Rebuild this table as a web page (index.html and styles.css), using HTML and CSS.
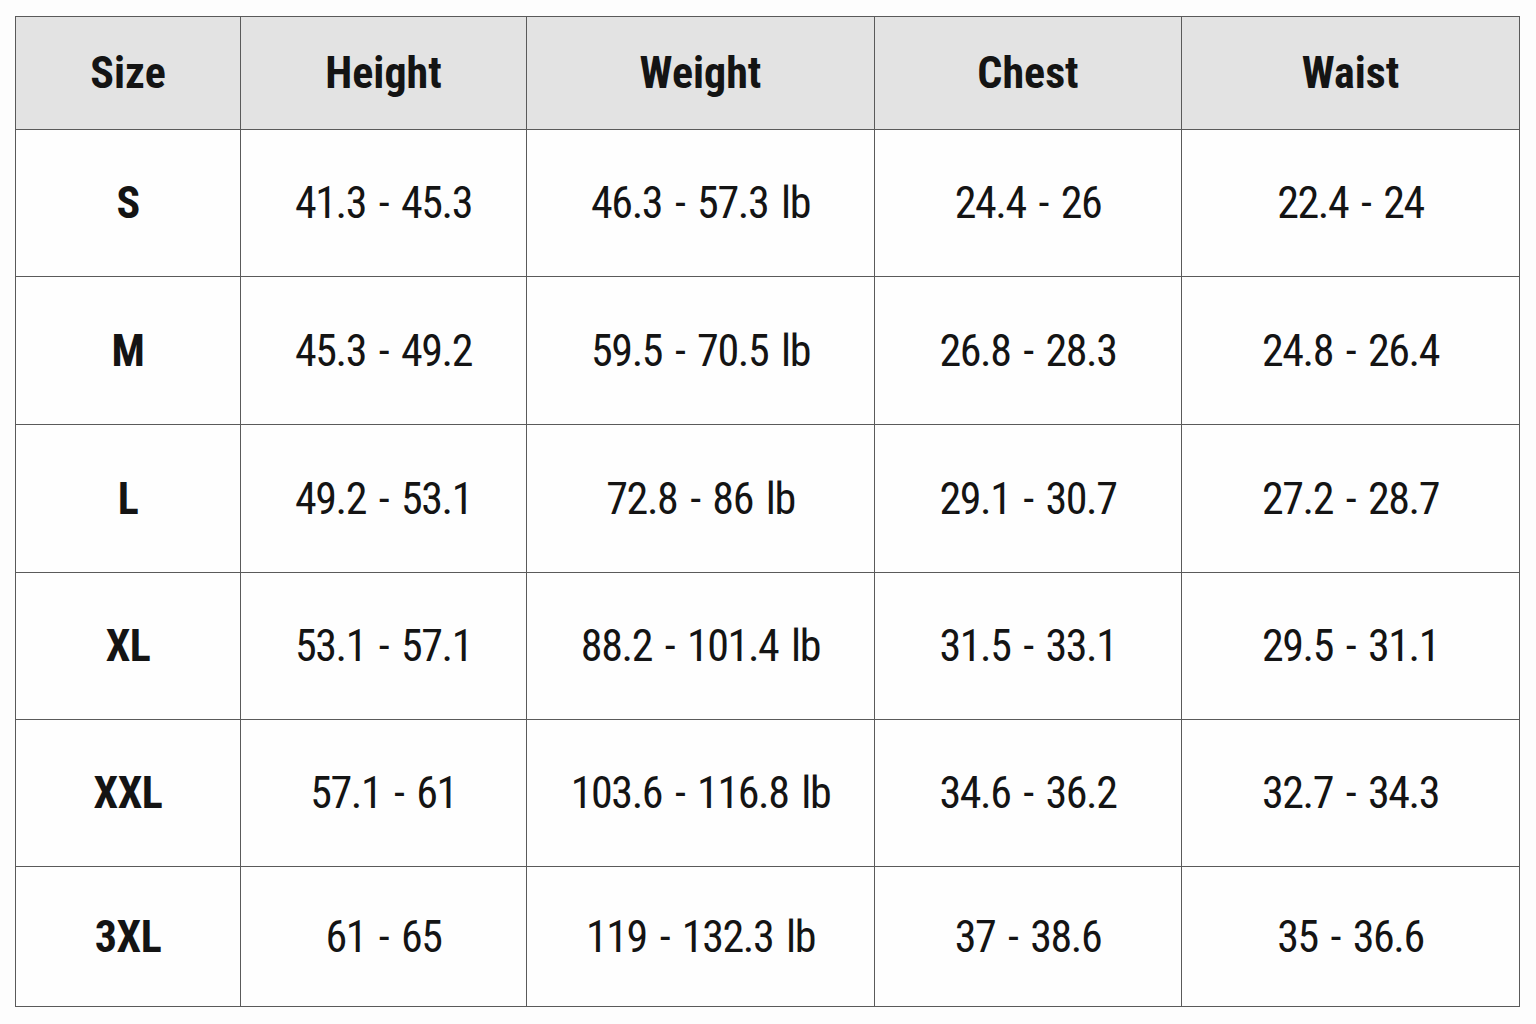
FILE: index.html
```html
<!DOCTYPE html>
<html>
<head>
<meta charset="utf-8">
<link rel="stylesheet" href="styles.css">
</head>
<body>
<table class="chart">
  <colgroup>
    <col class="c1"><col class="c2"><col class="c3"><col class="c4"><col class="c5">
  </colgroup>
  <thead>
    <tr class="head"><th>Size</th><th>Height</th><th>Weight</th><th>Chest</th><th>Waist</th></tr>
  </thead>
  <tbody>
    <tr class="r1"><td class="size">S</td><td>41.3 - 45.3</td><td>46.3 - 57.3 lb</td><td>24.4 - 26</td><td>22.4 - 24</td></tr>
    <tr class="r2"><td class="size">M</td><td>45.3 - 49.2</td><td>59.5 - 70.5 lb</td><td>26.8 - 28.3</td><td>24.8 - 26.4</td></tr>
    <tr class="r3"><td class="size">L</td><td>49.2 - 53.1</td><td>72.8 - 86 lb</td><td>29.1 - 30.7</td><td>27.2 - 28.7</td></tr>
    <tr class="r4"><td class="size">XL</td><td>53.1 - 57.1</td><td>88.2 - 101.4 lb</td><td>31.5 - 33.1</td><td>29.5 - 31.1</td></tr>
    <tr class="r5"><td class="size">XXL</td><td>57.1 - 61</td><td>103.6 - 116.8 lb</td><td>34.6 - 36.2</td><td>32.7 - 34.3</td></tr>
    <tr class="r6"><td class="size">3XL</td><td>61 - 65</td><td>119 - 132.3 lb</td><td>37 - 38.6</td><td>35 - 36.6</td></tr>
  </tbody>
</table>
</body>
</html>
```
FILE: styles.css
```css
html, body {
  margin: 0;
  padding: 0;
  background: #fdfdfd;
}
body {
  padding: 16px 17px 0 15px;
}
.chart {
  border-collapse: collapse;
  table-layout: fixed;
  width: 1504px;
  font-family: Roboto, "Open Sans", sans-serif;
  font-stretch: 75%;
  color: #141414;
  background: #fefefe;
}
.c1 { width: 225px; }
.c2 { width: 286px; }
.c3 { width: 348px; }
.c4 { width: 307px; }
.c5 { width: 338px; }
.chart th, .chart td {
  border: 1px solid #5a5a5a;
  text-align: center;
  vertical-align: middle;
  padding: 0;
  font-size: 44px;
  line-height: 1;
}
.chart th {
  background: #e3e3e3;
  font-weight: 700;
  letter-spacing: 0;
}
.chart td {
  font-weight: 380;
  letter-spacing: -1.4px;
  word-spacing: 4px;
}
.chart td.size {
  font-weight: 700;
  letter-spacing: -0.5px;
}
.head { height: 113px; }
.r1 { height: 147px; }
.r2 { height: 148px; }
.r3 { height: 148px; }
.r4 { height: 147px; }
.r5 { height: 147px; }
.r6 { height: 140px; }
```
